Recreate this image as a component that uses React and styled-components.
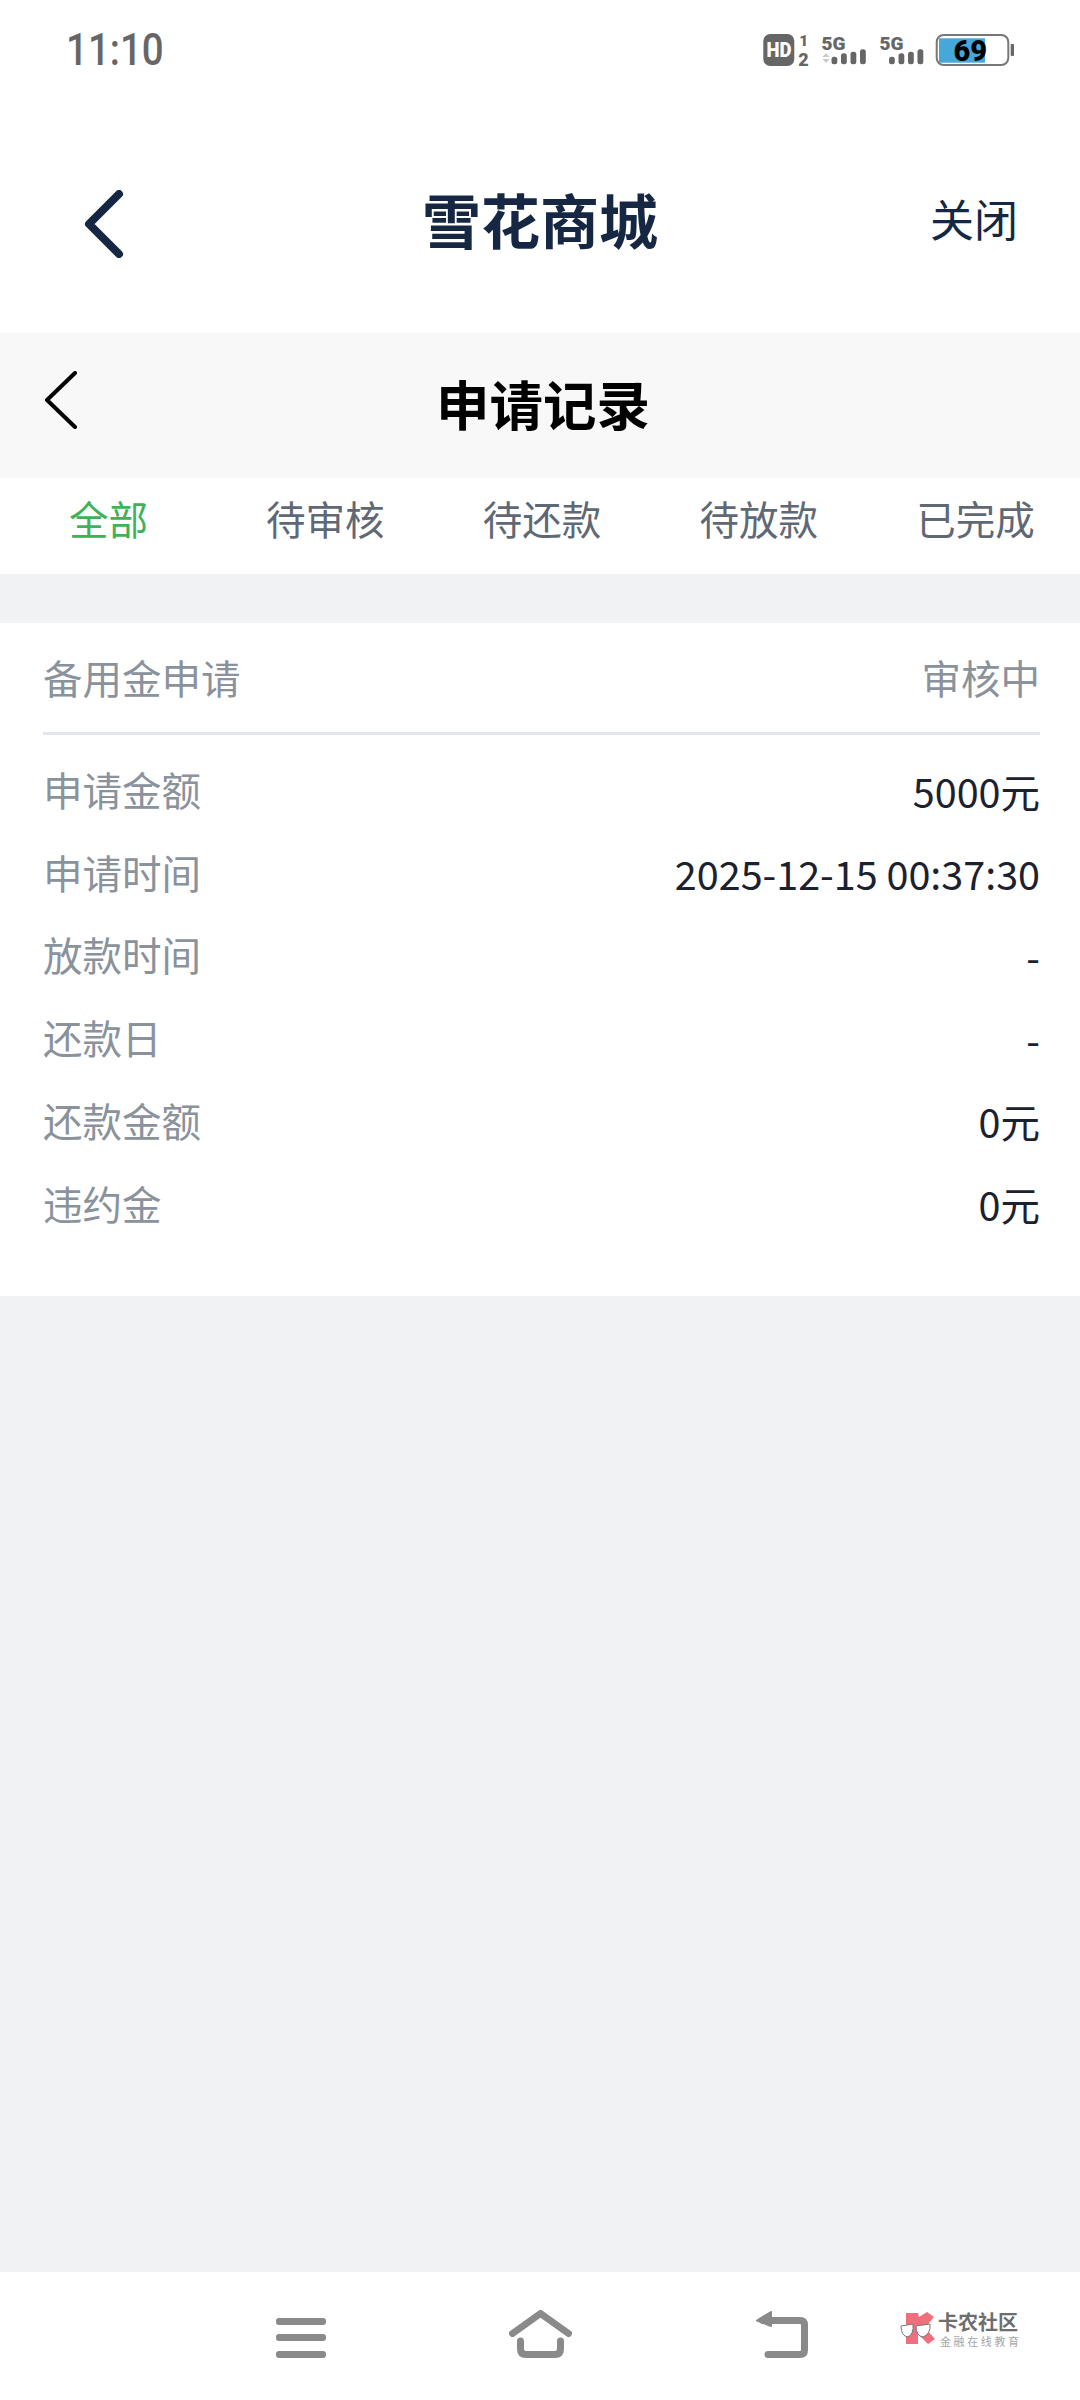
import React from 'react'
import styled, { createGlobalStyle } from 'styled-components'

const CJK = `"Noto Sans CJK SC", "Noto Sans", sans-serif`

const GlobalStyle = createGlobalStyle`
  html, body {
    margin: 0;
    padding: 0;
    background: #f1f2f4;
  }
  #root {
    height: 2400px;
  }
`

const Screen = styled.div`
  width: 1080px;
  height: 2400px;
  display: flex;
  flex-direction: column;
  overflow: hidden;
  background: #f1f2f4;
  font-family: ${CJK};
`

const StatusBar = styled.div`
  height: 100px;
  flex: none;
  display: flex;
  align-items: center;
  justify-content: space-between;
  padding: 0 62px 0 66px;
  background: #fff;
  box-sizing: border-box;
`

const Clock = styled.span`
  font-family: Roboto, sans-serif;
  font-size: 44px;
  font-weight: 500;
  line-height: 1;
  color: #666;
  transform: scaleX(0.875);
  transform-origin: left center;
`

const StatusIcons = styled.div`
  display: flex;
  align-items: center;
`

const AppHeader = styled.div`
  height: 233px;
  flex: none;
  display: grid;
  grid-template-columns: 1fr auto 1fr;
  align-items: center;
  padding: 15px 62px 0;
  box-sizing: border-box;
  background: #fff;
  color: #152743;
`

const AppBack = styled.div`
  display: flex;
  margin-left: 22px;
`

const AppTitle = styled.div`
  font-size: 59px;
  font-weight: 700;
  line-height: 1;
  margin-bottom: 12px;
`

const CloseText = styled.div`
  justify-self: end;
  font-size: 44px;
  line-height: 1;
  margin-bottom: 12px;
`

const SubHeader = styled.div`
  height: 145px;
  flex: none;
  display: grid;
  grid-template-columns: 1fr auto 1fr;
  align-items: center;
  padding: 0 38px 0 44px;
  box-sizing: border-box;
  background: #f8f8f8;
`

const SubBack = styled.div`
  display: flex;
  margin-bottom: 12px;
`

const SubTitle = styled.div`
  font-size: 53.5px;
  font-weight: 700;
  line-height: 1;
  color: #000;
  padding-bottom: 5px;
`

const Tabs = styled.div`
  height: 96px;
  flex: none;
  display: grid;
  grid-template-columns: repeat(5, 216.8px);
  background: #fff;
`

const Tab = styled.div`
  display: flex;
  justify-content: center;
  padding-top: 16px;
  font-size: 39.5px;
  line-height: 1.2;
  color: ${(p) => (p.$active ? '#3fb257' : '#5f6875')};
`

const Card = styled.div`
  margin-top: 49px;
  height: 673px;
  flex: none;
  padding: 0 40px 0 43px;
  box-sizing: border-box;
  background: #fff;
`

const CardHead = styled.div`
  height: 107px;
  padding-bottom: 2px;
  display: flex;
  align-items: center;
  justify-content: space-between;
  border-bottom: 3px solid #e4e6ef;
  font-size: 39.5px;
  line-height: 1;
  color: #8a929c;
`

const Rows = styled.div`
  padding-top: 14px;
`

const Row = styled.div`
  height: 82.7px;
  display: flex;
  align-items: center;
  justify-content: space-between;
  font-size: 39.5px;
  line-height: 1;
`

const Label = styled.span`
  color: #8a929c;
  margin-bottom: 3px;
`

const Value = styled.span`
  color: #1c2130;
`

const Spacer = styled.div`
  flex: 1;
`

const NavBar = styled.div`
  height: 128px;
  flex: none;
  position: relative;
  background: #fff;
  padding: 38px 0 0 276px;
  box-sizing: border-box;
`

const NavIcons = styled.div`
  display: flex;
  gap: 183px;
  align-items: flex-start;
`

const Watermark = styled.div`
  position: absolute;
  left: 900px;
  top: 40px;
  display: flex;
  align-items: flex-start;
  gap: 2px;
`

const WatermarkText = styled.div`
  display: flex;
  flex-direction: column;
  gap: 3px;
`

const WatermarkName = styled.div`
  font-size: 20px;
  font-weight: 700;
  line-height: 20px;
  color: #6e6e6e;
`

const WatermarkSub = styled.div`
  font-size: 11px;
  line-height: 13px;
  letter-spacing: 2.6px;
  padding-left: 2px;
  color: #a5a5a5;
`

const BackIcon = ({ width, height, stroke, color }) => (
  <svg width={width} height={height} viewBox={`0 0 ${width} ${height}`} fill="none">
    <path
      d={`M${width - stroke / 2 - 1} ${stroke / 2} L${stroke / 2 + 1} ${height / 2} L${width - stroke / 2 - 1} ${height - stroke / 2}`}
      stroke={color}
      strokeWidth={stroke}
      strokeLinecap="round"
      strokeLinejoin="round"
    />
  </svg>
)

const Bars = ({ x }) => (
  <>
    <rect x={x} y="24.7" width="5.8" height="7.6" rx="2.5" fill="#666" />
    <rect x={x + 9.5} y="21.3" width="5.8" height="11" rx="2.5" fill="#666" />
    <rect x={x + 19} y="19.7" width="5.8" height="12.6" rx="2.5" fill="#666" />
    <rect x={x + 28.5} y="17.3" width="5.8" height="15" rx="2.5" fill="#666" />
  </>
)

const StatusCluster = () => (
  <svg width="256" height="36" viewBox="0 0 256 36">
    <rect x="1.3" y="2" width="31" height="32" rx="7" fill="#666" />
    <text x="4.5" y="25" textLength="25" lengthAdjust="spacingAndGlyphs" fontFamily="Roboto, sans-serif" fontWeight="900" fontSize="20" fill="#fff">HD</text>
    <text x="41.7" y="14" textAnchor="middle" fontFamily="Roboto, sans-serif" fontWeight="900" fontSize="15.5" fill="#666">1</text>
    <text x="41.5" y="34" textAnchor="middle" fontFamily="Roboto, sans-serif" fontWeight="900" fontSize="18" fill="#666">2</text>
    <text x="59.5" y="18" fontFamily="Roboto, sans-serif" fontWeight="900" fontSize="19" fill="#666">5G</text>
    <path d="M60.5 25l3.5-4 3.5 4zM60.5 27l3.5 4 3.5-4z" fill="#c9c9c9" />
    <Bars x={69.5} />
    <text x="117.5" y="18" fontFamily="Roboto, sans-serif" fontWeight="900" fontSize="19" fill="#666">5G</text>
    <Bars x={127} />
    <rect x="174.7" y="3" width="71.6" height="30" rx="7" fill="#fff" stroke="#777" strokeWidth="2" />
    <rect x="177" y="6.3" width="46" height="24.4" fill="#45a7da" />
    <text x="208.3" y="28.7" textAnchor="middle" fontFamily="Roboto, sans-serif" fontWeight="900" fontSize="29" fill="#000">69</text>
    <rect x="248.7" y="12" width="3.3" height="12" rx="1" fill="#666" />
  </svg>
)

const MenuIcon = () => (
  <svg width="50" height="48" viewBox="0 0 50 48" fill="#8a8a8a">
    <rect y="8" width="50" height="7" rx="3" />
    <rect y="24" width="50" height="7" rx="3" />
    <rect y="41" width="50" height="7" rx="3" />
  </svg>
)

const HomeIcon = () => (
  <svg width="63" height="48" viewBox="0 0 63 48" fill="none" stroke="#8a8a8a" strokeLinecap="round" strokeLinejoin="round" strokeWidth="7">
    <path d="M3.5 23.5 L31.5 3.5 L59.5 23.5" />
    <path d="M11.5 31 V39 Q11.5 44.5 17 44.5 H46 Q51.5 44.5 51.5 39 V31" />
  </svg>
)

const ReturnIcon = () => (
  <svg width="53" height="48" viewBox="0 0 53 48" fill="none" stroke="#8a8a8a" strokeLinecap="round" strokeLinejoin="round">
    <path d="M8 10.5 H45 Q49.5 10.5 49.5 15 V40 Q49.5 44.5 45 44.5 H13" strokeWidth="7" />
    <path d="M16 2 L2 10.5 L16 16 Z" fill="#8a8a8a" strokeWidth="2" />
  </svg>
)

const LogoMark = () => (
  <svg width="36" height="34" viewBox="0 0 36 34">
    <path d="M6 1 H18 L19 5 L27 0 L34 5 L25 16 L35 27 L28 32 L18 22 V32 H6 Z" fill="#ef6f7e" />
    <path d="M1 14 L13 12 Q14 22 8 25 Q1 24 1 14Z M16 14 L30 12 Q31 22 23 25 Q16 24 16 14Z" fill="#fff" stroke="#777" strokeWidth="1" />
  </svg>
)

const rows = [
  ['申请金额', '5000元'],
  ['申请时间', '2025-12-15 00:37:30'],
  ['放款时间', '-'],
  ['还款日', '-'],
  ['还款金额', '0元'],
  ['违约金', '0元'],
]

const tabs = ['全部', '待审核', '待还款', '待放款', '已完成']

export default function App() {
  return (
    <Screen>
      <GlobalStyle />
      <StatusBar>
        <Clock>11:10</Clock>
        <StatusIcons>
          <StatusCluster />
        </StatusIcons>
      </StatusBar>
      <AppHeader>
        <AppBack>
          <BackIcon width={40} height={68} stroke={8} color="#152743" />
        </AppBack>
        <AppTitle>雪花商城</AppTitle>
        <CloseText>关闭</CloseText>
      </AppHeader>
      <SubHeader>
        <SubBack>
          <BackIcon width={34} height={58} stroke={4} color="#000" />
        </SubBack>
        <SubTitle>申请记录</SubTitle>
      </SubHeader>
      <Tabs>
        {tabs.map((t, i) => (
          <Tab key={t} $active={i === 0}>{t}</Tab>
        ))}
      </Tabs>
      <Card>
        <CardHead>
          <span>备用金申请</span>
          <span>审核中</span>
        </CardHead>
        <Rows>
          {rows.map(([label, value]) => (
            <Row key={label}>
              <Label>{label}</Label>
              <Value>{value}</Value>
            </Row>
          ))}
        </Rows>
      </Card>
      <Spacer />
      <NavBar>
        <NavIcons>
          <MenuIcon />
          <HomeIcon />
          <ReturnIcon />
        </NavIcons>
        <Watermark>
          <LogoMark />
          <WatermarkText>
            <WatermarkName>卡农社区</WatermarkName>
            <WatermarkSub>金融在线教育</WatermarkSub>
          </WatermarkText>
        </Watermark>
      </NavBar>
    </Screen>
  )
}
